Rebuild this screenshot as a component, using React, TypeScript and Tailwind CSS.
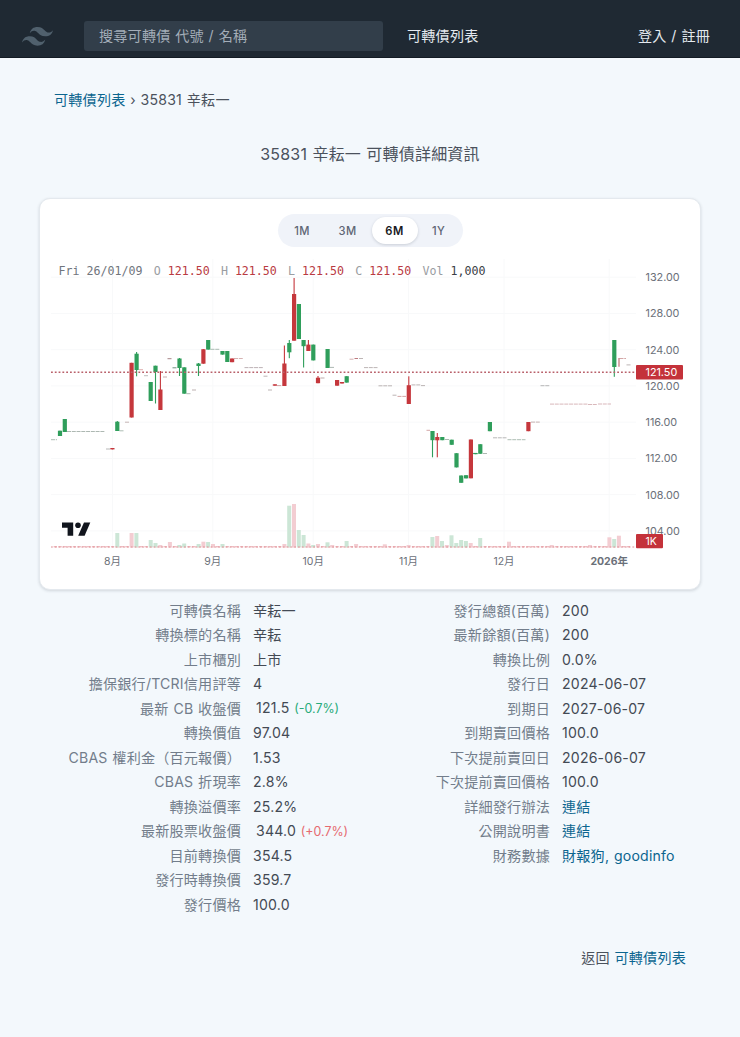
import React from 'react';

type Tone = 'g' | 'r';
// [x, wickTop, bodyTop, bodyBottom, wickBottom, tone]
type Candle = [number, number, number, number, number, Tone];

const candles: Candle[] = [
  [60, 430.7, 430.7, 436, 436, 'g'], [64.8, 419, 419, 432, 432, 'g'], [112.4, 448, 448, 449.4, 449.4, 'r'],
  [117.3, 421, 421.7, 431, 431, 'g'], [131.6, 362.8, 362.8, 417.5, 417.5, 'r'], [136.6, 352, 353.7, 370, 376.3, 'g'],
  [150.7, 382, 382, 401, 401, 'g'], [155.5, 365.7, 365.7, 372, 403.5, 'g'], [160.4, 371, 389.5, 410, 410, 'r'],
  [179.5, 358, 358.5, 368, 376, 'g'], [184.3, 367.3, 367.3, 393.7, 393.7, 'g'], [198.5, 363, 363.5, 366, 376, 'g'],
  [203.4, 349.2, 349.2, 363.7, 363.7, 'r'], [208.2, 340, 340, 349.6, 349.6, 'g'], [222.5, 351, 351, 354.6, 354.6, 'g'],
  [227.3, 351, 351, 362, 362, 'g'], [232.1, 358.5, 358.5, 362.2, 362.2, 'r'], [274.9, 384.3, 384.3, 385.7, 385.7, 'r'],
  [284.4, 345.5, 363.5, 386, 386, 'r'], [289.3, 340, 343, 352.3, 358.2, 'g'], [294.1, 278, 294, 340.7, 340.7, 'r'],
  [298.9, 304, 304, 339, 339, 'g'], [303.6, 340, 340, 346.2, 367.5, 'g'], [308.4, 340, 344.6, 351, 351, 'r'],
  [313.3, 344.6, 344.6, 360.4, 360.4, 'g'], [318, 376, 377.7, 383.2, 383.2, 'r'], [327.6, 349, 349, 368, 368, 'g'],
  [337.1, 380, 380, 385.7, 385.7, 'r'], [342, 382, 382, 383.5, 383.5, 'r'], [346.7, 376.2, 376.2, 382.6, 382.6, 'g'],
  [408.8, 376.3, 385.2, 404, 404, 'r'], [432.5, 431, 431, 440.2, 457.3, 'g'], [437.3, 433, 437, 440.3, 457.3, 'r'],
  [442.3, 437, 437, 440.2, 440.2, 'g'], [451.7, 439.7, 439.7, 444.8, 444.8, 'g'], [456.5, 453.2, 453.2, 467.4, 467.4, 'g'],
  [461.2, 475.5, 475.5, 482.8, 482.8, 'g'], [466.1, 475.2, 475.2, 478.4, 478.4, 'g'], [470.9, 439.5, 439.5, 478.3, 478.3, 'r'],
  [475.6, 453, 453, 454.2, 454.2, 'g'], [480.3, 444.2, 444.2, 453.8, 453.8, 'g'], [489.9, 422, 422, 431.2, 431.2, 'g'],
  [528.4, 422, 422, 431.2, 431.2, 'r'], [614.3, 340, 340, 367, 376.8, 'g'],
];

// [x1, x2, y, color] sessions that opened and closed at the same price
const flats: [number, number, number, string][] = [
  [51, 57, 439.7, '#8aa094'], [67, 105, 431.5, '#8a9a90'], [106, 110, 449, '#9a9a9a'], [119.5, 124, 430.8, '#8aa094'],
  [125, 129, 422.2, '#b09a9a'], [139, 143, 369.7, '#cf8a8a'], [144, 148, 375.7, '#a0a0a0'], [163, 167, 377, '#b08a8a'],
  [167.5, 172, 358.7, '#805055'], [172.5, 177, 367.8, '#306048'], [186.5, 191, 393.7, '#8a9a90'], [192, 196, 390, '#a09090'],
  [210.5, 220, 349.3, '#8aa094'], [234, 243.5, 358.5, '#c49090'], [244.5, 263, 367.6, '#a09095'], [263.5, 267.5, 376.2, '#a09595'],
  [268, 272, 390, '#a09595'], [277, 282, 385.6, '#c08080'], [320.5, 324.5, 378, '#a08888'], [330, 334.5, 367.4, '#8a9a90'],
  [349.5, 353.5, 359.2, '#c49090'], [354.5, 358, 358.5, '#a04048'], [359, 363, 358.5, '#a09595'], [364, 377.5, 367.6, '#a09595'],
  [378.5, 392, 385.8, '#a09595'], [392.5, 396.5, 395.2, '#a09595'], [397.5, 406, 396.4, '#c08080'], [411.5, 420.5, 384.9, '#a09595'],
  [421, 425.5, 385.6, '#a09595'], [426.5, 430, 430.3, '#c08080'], [445, 449, 439.5, '#8a9a90'], [473, 477, 453.4, '#306048'],
  [483, 487, 453.5, '#8a9a90'], [493, 506.5, 437.8, '#9a9a9a'], [507.5, 525.5, 439.7, '#8aa094'], [531, 540, 422.1, '#b09090'],
  [540.5, 549.5, 385.7, '#9a9a9a'], [550, 587.5, 404.1, '#c89a9e'], [588, 597, 404.5, '#c89a9e'], [598, 611, 404, '#c89a9e'],
  [619.5, 626, 358.5, '#c08080'], [626.5, 630.5, 364.9, '#a09595'],
];

const volumes: [number, number, Tone][] = [
  [117.3, 533, 'g'], [131.6, 533, 'r'], [136.4, 533, 'g'], [150.7, 540, 'g'], [155.5, 543, 'g'], [160.3, 545, 'r'],
  [169.9, 542, 'r'], [179.4, 545, 'g'], [184.2, 543.5, 'g'], [198.6, 544, 'g'], [203.4, 541.7, 'r'], [208.1, 542, 'g'],
  [213, 544, 'r'], [222.5, 544, 'g'], [284.4, 544, 'r'], [289.2, 505.7, 'g'], [294, 504, 'r'], [298.8, 530, 'g'],
  [303.6, 535, 'g'], [308.4, 543.5, 'r'], [313.2, 545, 'g'], [318, 544, 'r'], [327.5, 542.3, 'g'], [332.2, 545, 'r'],
  [346.6, 541, 'g'], [356.1, 544, 'r'], [384.8, 544.3, 'r'], [408.6, 545, 'r'], [432.4, 537, 'g'], [437.2, 536, 'r'],
  [442, 541, 'g'], [446.8, 545, 'r'], [451.5, 535.3, 'g'], [456.3, 543, 'g'], [461.1, 540, 'g'], [465.9, 541, 'g'],
  [470.7, 543, 'r'], [480.2, 538, 'g'], [509, 541.7, 'r'], [551.7, 545, 'r'], [590, 545, 'r'], [609.4, 537.3, 'r'],
  [614.2, 539, 'g'], [618.9, 535.7, 'r'],
];

const baseline = Array.from({ length: 121 }, (_, i) => 55.3 + i * 4.776);
const prices = [132, 128, 124, 120, 116, 112, 108, 104];
const priceY = (p: number) => 277.2 + (132 - p) * 9.06;
const months: [number, string][] = [[112.4, '8月'], [212.8, '9月'], [313.2, '10月'], [408.6, '11月'], [504, '12月'], [609.2, '2026年']];
const fill = (t: Tone) => (t === 'g' ? '#2f9e5b' : '#c5373c');

function Chart() {
  return (
    <svg className="block tracking-normal" width="660" height="302" viewBox="40 288 660 302" overflow="visible">
      <g stroke="#f8f9fa" strokeWidth="1">
        {prices.map((p) => <line key={p} x1="51" x2="636" y1={priceY(p)} y2={priceY(p)} />)}
        {months.map(([x]) => <line key={x} x1={x} x2={x} y1="259" y2="547" />)}
      </g>
      {baseline.map((x) => <rect key={x} x={x - 1.7} y="546" width="3.4" height="1.4" fill="#f0bfc4" />)}
      {volumes.map(([x, y, t]) => (
        <rect key={x} x={x - 2} y={y} width="4" height={547.3 - y} fill={t === 'g' ? '#cce6d6' : '#f3cdd2'} />
      ))}
      <line x1="51" x2="636" y1="547" y2="547" stroke="#dd8e94" strokeWidth="1" strokeDasharray="1.8 2" />
      {flats.map(([a, b, y, c]) => <line key={`${a}-${y}`} x1={a} x2={b} y1={y} y2={y} stroke={c} strokeWidth="0.7" strokeDasharray="4 0.77" />)}
      <line x1="619" x2="619" y1="358" y2="366.7" stroke="#b96569" strokeWidth="1.1" />
      {candles.map(([x, wt, t, b, wb, c]) => (
        <g key={x} fill={fill(c)}>
          <rect x={x - 0.55} y={wt} width="1.1" height={wb - wt} />
          <rect x={x - 2.1} y={t} width="4.2" height={b - t} />
        </g>
      ))}
      <line x1="51" x2="636" y1="372.2" y2="372.2" stroke="#b9606a" strokeWidth="1.4" strokeDasharray="1.8 2" />
      <g fontFamily="Inter, 'Noto Sans CJK TC', sans-serif" fontSize="10.8" fill="#6b7079">
        {prices.map((p) => <text key={p} x="645.5" y={priceY(p) + 3.9}>{p.toFixed(2)}</text>)}
        {months.map(([x, label]) => (
          <text key={label} x={x} y="565.4" fontSize="10.5" textAnchor="middle" fontWeight={label === '2026年' ? 700 : 400}>{label}</text>
        ))}
        <rect x="636" y="364.9" width="47" height="14.6" rx="1" fill="#c4323a" />
        <text x="645.5" y="376.2" fill="#fff">121.50</text>
        <rect x="636" y="534" width="27" height="14.3" rx="1" fill="#c4323a" />
        <text x="645.5" y="545.3" fill="#fff" fontSize="10.5">1K</text>
      </g>
      <g fill="#11151d">
        <path d="M62 522.4h11.2v13.4h-5.6v-8H62z" />
        <circle cx="78" cy="525.2" r="2.8" />
        <path d="M84 522.4h6.3l-5.7 13.4h-6.4z" />
      </g>
    </svg>
  );
}

function Quote({ label, value }: { label: string; value: string }) {
  return (
    <span className="mr-[11.2px] whitespace-pre text-[#9a9da2]">
      {label} <span className="text-[#b93a42]">{value}</span>
    </span>
  );
}

function Row({ label, children }: { label: string; children: React.ReactNode }) {
  return (
    <div className="flex h-[24.5px] items-center gap-3 whitespace-nowrap">
      <dt className="w-[202px] shrink-0 text-right text-[#727d8b]">{label}</dt>
      <dd className="text-[#434a54]">{children}</dd>
    </div>
  );
}

const link = 'text-[#0b658f]';

export default function App() {
  return (
    <div className="h-[1037px] w-[740px] overflow-hidden bg-[#f3f8fc] font-['Inter','Noto_Sans_CJK_TC',sans-serif] text-[14.1px] leading-[24.5px] tracking-[0.2px] text-[#4b525c] [word-spacing:0.6px]">
      <header className="flex h-[58px] items-start border-b border-[#131b24] bg-[#1f2933] pr-[30px] pl-[22px] pt-[20.5px] text-[#e4e9ef]">
        <svg className="mt-[6px] h-[19px] w-[31px]" viewBox="0 0 54 33" fill="#50606d">
          <path d="M27 0C19.8 0 15.3 3.6 13.5 10.8 16.2 7.2 19.35 5.85 22.95 6.75c2.05.51 3.52 2 5.15 3.65C30.75 13.09 33.81 16.2 40.5 16.2c7.2 0 11.7-3.6 13.5-10.8-2.7 3.6-5.85 4.95-9.45 4.05-2.05-.51-3.52-2-5.15-3.65C36.75 3.11 33.69 0 27 0zM13.5 16.2C6.3 16.2 1.8 19.8 0 27c2.7-3.6 5.85-4.95 9.45-4.05 2.05.51 3.52 2 5.15 3.65C17.25 29.29 20.31 32.4 27 32.4c7.2 0 11.7-3.6 13.5-10.8-2.7 3.6-5.85 4.95-9.45 4.05-2.05-.51-3.52-2-5.15-3.65C23.25 19.31 20.19 16.2 13.5 16.2z" />
        </svg>
        <div className="ml-[31px] flex h-[30px] w-[299px] items-center rounded-[3px] bg-[#323e4a] px-[15px] pt-[2px] text-[#a3adb8]">搜尋可轉債 代號 / 名稱</div>
        <nav className="ml-6 flex h-[30px] flex-1 items-center justify-between pt-[2px]">
          <a>可轉債列表</a>
          <a>登入 / 註冊</a>
        </nav>
      </header>

      <nav className="mt-[30px] h-[24px] pl-[54px]">
        <a className={link}>可轉債列表</a> › 35831 辛耘一
      </nav>
      <h1 className="mt-[30px] h-[24px] text-center text-[16px]">35831 辛耘一 可轉債詳細資訊</h1>

      <section className="mx-[39px] mt-[32px] h-[392px] rounded-[11px] border border-[#e4e9ee] bg-white shadow-[0_1px_3px_rgba(30,41,59,0.16)]">
        <div className="flex h-[63px] justify-center pt-[15px]">
          <div className="flex h-[33px] w-[185px] rounded-full bg-[#f0f3f9] p-[3px] text-center text-[11.2px] leading-[28px] font-medium tracking-[0.4px] text-[#5f6675]">
            <button className="w-[43px]">1M</button>
            <button className="w-[48px]">3M</button>
            <button className="w-[46px] rounded-full bg-white font-semibold text-[#17191e] shadow-[0_1px_3px_rgba(30,41,59,0.18)]">6M</button>
            <button className="w-[42px]">1Y</button>
          </div>
        </div>
        <div className="relative z-10 flex h-[26px] pl-[18.5px] font-['DejaVu_Sans_Mono',monospace] text-[11.63px] leading-[18px] tracking-normal [word-spacing:0px]">
          <span className="mr-[11.2px] whitespace-pre text-[#70757d]">Fri 26/01/09</span>
          <Quote label="O" value="121.50" />
          <Quote label="H" value="121.50" />
          <Quote label="L" value="121.50" />
          <Quote label="C" value="121.50" />
          <span className="whitespace-pre text-[#9a9da2]">Vol <span className="text-[#3a3e45]">1,000</span></span>
        </div>
        <Chart />
      </section>

      <div className="mt-[8.5px] flex">
        <dl className="w-[309px] shrink-0 pl-[39px]">
          <Row label="可轉債名稱">辛耘一</Row>
          <Row label="轉換標的名稱">辛耘</Row>
          <Row label="上市櫃別">上市</Row>
          <Row label="擔保銀行/TCRI信用評等">4</Row>
          <Row label="最新 CB 收盤價"><span className="ml-[3px]">121.5</span> <span className="text-[12.4px] tracking-normal text-[#27ab7a]">(-0.7%)</span></Row>
          <Row label="轉換價值">97.04</Row>
          <Row label="CBAS 權利金（百元報價）">1.53</Row>
          <Row label="CBAS 折現率">2.8%</Row>
          <Row label="轉換溢價率">25.2%</Row>
          <Row label="最新股票收盤價"><span className="ml-[3px]">344.0</span> <span className="text-[12.4px] tracking-normal text-[#e66a70]">(+0.7%)</span></Row>
          <Row label="目前轉換價">354.5</Row>
          <Row label="發行時轉換價">359.7</Row>
          <Row label="發行價格">100.0</Row>
        </dl>
        <dl className="pl-[39px]">
          <Row label="發行總額(百萬)">200</Row>
          <Row label="最新餘額(百萬)">200</Row>
          <Row label="轉換比例">0.0%</Row>
          <Row label="發行日">2024-06-07</Row>
          <Row label="到期日">2027-06-07</Row>
          <Row label="到期賣回價格">100.0</Row>
          <Row label="下次提前賣回日">2026-06-07</Row>
          <Row label="下次提前賣回價格">100.0</Row>
          <Row label="詳細發行辦法"><a className={link}>連結</a></Row>
          <Row label="公開說明書"><a className={link}>連結</a></Row>
          <Row label="財務數據"><a className={link}>財報狗</a><span className={link}>, </span><a className={link}>goodinfo</a></Row>
        </dl>
      </div>

      <footer className="mt-[28.5px] pr-[54px] text-right">
        返回 <a className={link}>可轉債列表</a>
      </footer>
    </div>
  );
}
